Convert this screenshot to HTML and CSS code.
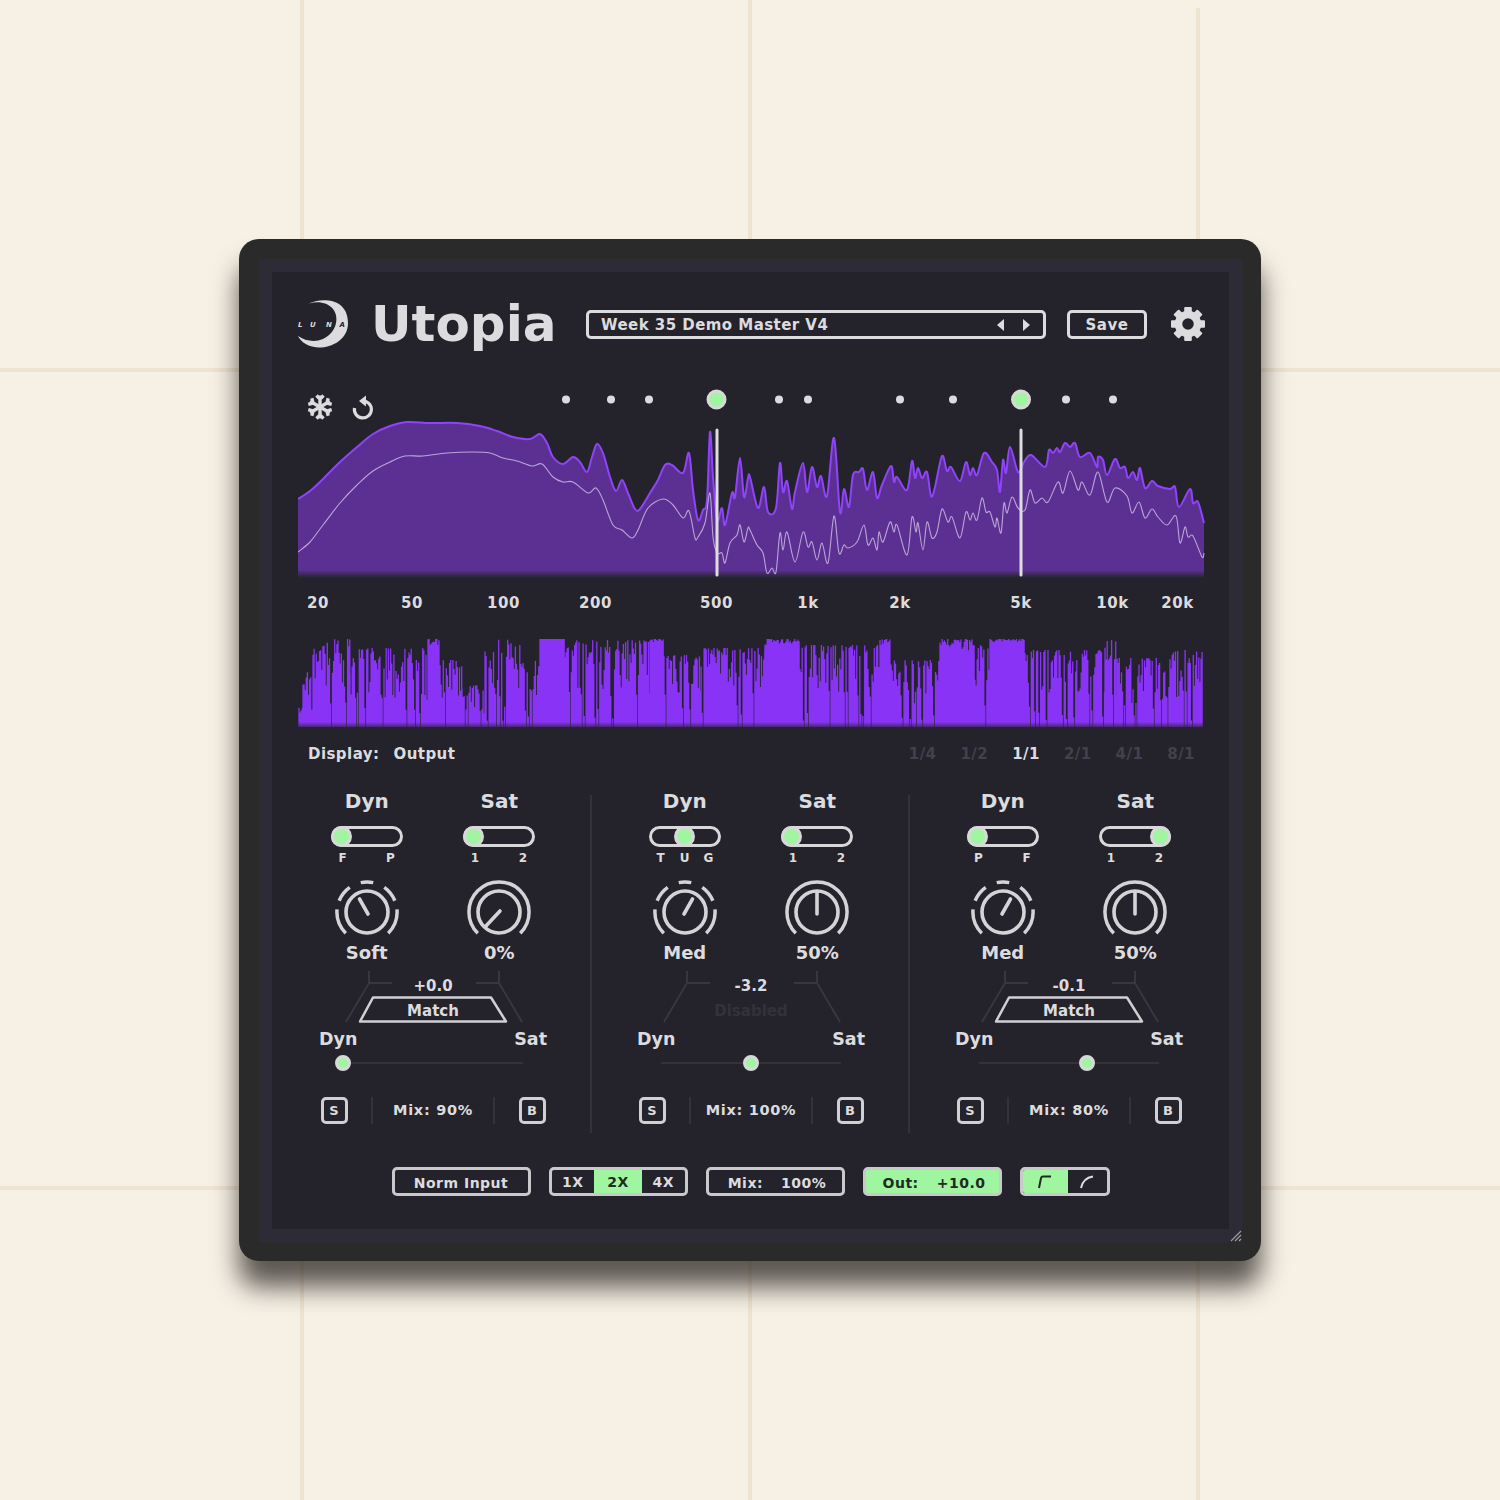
FILE: index.html
```html
<!DOCTYPE html>
<html lang="en">
<head>
  <meta charset="UTF-8">
  <title>Utopia</title>
  <link rel="stylesheet" href="styles.css">
</head>
<body>

<svg class="defs" width="0" height="0">
  <defs>
    <path id="ringSeg" d="M-6.45 -30.3A31 31 0 0 1 6.45 -30.3M17.8 -25.4A31 31 0 0 1 28.7 -11.6M30.9 -2.7A31 31 0 0 1 21.9 21.9M-28.7 -11.6A31 31 0 0 1 -17.8 -25.4M-21.9 21.9A31 31 0 0 1 -30.9 -2.7"/>
    <path id="ringFull" d="M-21.9 21.9A31 31 0 1 1 21.9 21.9"/>
    <linearGradient id="specGrad" gradientUnits="userSpaceOnUse" x1="0" y1="570" x2="0" y2="578">
      <stop offset="0" stop-color="#5c3093"/>
      <stop offset="1" stop-color="#5c3093" stop-opacity="0"/>
    </linearGradient>
    <linearGradient id="waveGrad" gradientUnits="userSpaceOnUse" x1="0" y1="722" x2="0" y2="728">
      <stop offset="0" stop-color="#8833f5"/>
      <stop offset="1" stop-color="#8833f5" stop-opacity="0.2"/>
    </linearGradient>
  </defs>
</svg>

<div class="window">
  <div class="frame">
    <div class="panel">

      <header class="top">
        <svg class="logo" viewBox="297 297 52 48">
          <path class="logo-moon" d="M309 300.500C320 295 348 294 348 320C348 337 331 345 318 344.500C308 344 301 339 298 333C305 338 315 339.500 323 336C336 330 340 315 333 306C327 299 318 298 309 300.500Z"/>
          <text class="logo-text" x="298" y="323.500">L</text>
          <text class="logo-text" x="310" y="323.500">U</text>
          <text class="logo-text" x="326" y="323.500">N</text>
          <text class="logo-text dark" x="339.500" y="323.500">A</text>
        </svg>
        <h1 class="title">Utopia</h1>
        <div class="preset">
          <span class="preset-name">Week 35 Demo Master V4</span>
          <svg class="arrows" viewBox="0 0 34 12">
            <polygon points="0,6 7,0 7,12"/>
            <polygon points="26,0 33,6 26,12"/>
          </svg>
        </div>
        <button class="btn save">Save</button>
        <svg class="gear" viewBox="-18 -18 36 36">
          <g>
            <rect x="-3.800" y="-17" width="7.600" height="8" rx="1"/>
            <rect x="-3.800" y="-17" width="7.600" height="8" rx="1" transform="rotate(45)"/>
            <rect x="-3.800" y="-17" width="7.600" height="8" rx="1" transform="rotate(90)"/>
            <rect x="-3.800" y="-17" width="7.600" height="8" rx="1" transform="rotate(135)"/>
            <rect x="-3.800" y="-17" width="7.600" height="8" rx="1" transform="rotate(180)"/>
            <rect x="-3.800" y="-17" width="7.600" height="8" rx="1" transform="rotate(225)"/>
            <rect x="-3.800" y="-17" width="7.600" height="8" rx="1" transform="rotate(270)"/>
            <rect x="-3.800" y="-17" width="7.600" height="8" rx="1" transform="rotate(315)"/>
          </g>
          <circle class="gear-body" r="9.500"/>
        </svg>
      </header>

      <svg class="analyzer" viewBox="298 385 907 230">
        <path id="specFill" fill="url(#specGrad)"/>
        <path id="specTop" class="spec-top"/>
        <path id="specLow" class="spec-low"/>

        <line class="cut" x1="717" y1="430" x2="717" y2="575"/>
        <line class="cut" x1="1021" y1="430" x2="1021" y2="575"/>

        <g class="dots">
          <circle cx="566" cy="399.500" r="4"/>
          <circle cx="611" cy="399.500" r="4"/>
          <circle cx="649" cy="399.500" r="4"/>
          <circle cx="779" cy="399.500" r="4"/>
          <circle cx="808" cy="399.500" r="4"/>
          <circle cx="900" cy="399.500" r="4"/>
          <circle cx="953" cy="399.500" r="4"/>
          <circle cx="1066" cy="399.500" r="4"/>
          <circle cx="1113" cy="399.500" r="4"/>
        </g>
        <circle class="handle" cx="716.500" cy="399.500" r="8.500"/>
        <circle class="handle" cx="1021" cy="399.500" r="8.500"/>

        <!-- freeze -->
        <g class="snow" transform="translate(320 407)">
          <path d="M0 0V-11.500M-3.500 -11.500L0 -8L3.500 -11.500"/>
          <path d="M0 0V-11.500M-3.500 -11.500L0 -8L3.500 -11.500" transform="rotate(60)"/>
          <path d="M0 0V-11.500M-3.500 -11.500L0 -8L3.500 -11.500" transform="rotate(120)"/>
          <path d="M0 0V-11.500M-3.500 -11.500L0 -8L3.500 -11.500" transform="rotate(180)"/>
          <path d="M0 0V-11.500M-3.500 -11.500L0 -8L3.500 -11.500" transform="rotate(240)"/>
          <path d="M0 0V-11.500M-3.500 -11.500L0 -8L3.500 -11.500" transform="rotate(300)"/>
        </g>
        <!-- reset -->
        <g transform="translate(363 409)">
          <path class="reset" d="M-1 -8A8.500 8.500 0 1 1 -8.500 -1"/>
          <polygon class="reset-head" points="-4,-8 3,-13.500 3,-2.500"/>
        </g>

        <g class="freqs">
          <text x="318" y="608">20</text>
          <text x="412" y="608">50</text>
          <text x="503.500" y="608">100</text>
          <text x="595.500" y="608">200</text>
          <text x="716.500" y="608">500</text>
          <text x="808" y="608">1k</text>
          <text x="900" y="608">2k</text>
          <text x="1021" y="608">5k</text>
          <text x="1112.500" y="608">10k</text>
          <text x="1177.500" y="608">20k</text>
        </g>
      </svg>

      <svg class="wave" viewBox="298 636 907 92">
        <path id="wave" class="wave-bars"/>
      </svg>

      <div class="display-row">
        <div class="display">
          <span>Display:</span>
          <span>Output</span>
        </div>
        <div class="rates">
          <span>1/4</span>
          <span>1/2</span>
          <span class="on">1/1</span>
          <span>2/1</span>
          <span>4/1</span>
          <span>8/1</span>
        </div>
      </div>

      <div class="bands">

        <section class="band">
          <div class="pair">
            <div class="unit">
              <div class="unit-title">Dyn</div>
              <div class="switch"><i class="knob"></i></div>
              <div class="ticks"><span>F</span><span>P</span></div>
              <svg class="dial" viewBox="-34 -32 68 64">
                <use class="ring" href="#ringSeg"/><circle r="21"/>
                <line x1="1" y1="2" x2="-7.500" y2="-13"/>
              </svg>
              <div class="dial-value">Soft</div>
            </div>
            <div class="unit">
              <div class="unit-title">Sat</div>
              <div class="switch"><i class="knob"></i></div>
              <div class="ticks"><span>1</span><span>2</span></div>
              <svg class="dial" viewBox="-34 -32 68 64">
                <use class="ring" href="#ringFull"/><circle r="21"/>
                <line x1="1" y1="-1" x2="-14" y2="15"/>
              </svg>
              <div class="dial-value">0%</div>
            </div>
          </div>
          <div class="link">
            <svg class="link-lines" viewBox="0 0 190 52">
              <path d="M31 0V12H54M31 12L8 51M161 0V12H138M161 12L184 51"/>
            </svg>
            <div class="link-value">+0.0</div>
            <svg class="match-shape" viewBox="0 0 150 27">
              <path d="M15 1.500H133L148 25.500H2Z"/>
            </svg>
            <div class="match">Match</div>
          </div>
          <div class="blend-labels"><span>Dyn</span><span>Sat</span></div>
          <div class="slider"><i class="knob" style="left: 0%"></i></div>
          <div class="foot">
            <div class="box">S</div>
            <div class="mix">Mix: 90%</div>
            <div class="box">B</div>
          </div>
        </section>

        <section class="band">
          <div class="pair">
            <div class="unit">
              <div class="unit-title">Dyn</div>
              <div class="switch mid"><i class="knob"></i></div>
              <div class="ticks"><span>T</span><span>U</span><span>G</span></div>
              <svg class="dial" viewBox="-34 -32 68 64">
                <use class="ring" href="#ringSeg"/><circle r="21"/>
                <line x1="-1" y1="2" x2="7.500" y2="-13"/>
              </svg>
              <div class="dial-value">Med</div>
            </div>
            <div class="unit">
              <div class="unit-title">Sat</div>
              <div class="switch"><i class="knob"></i></div>
              <div class="ticks"><span>1</span><span>2</span></div>
              <svg class="dial" viewBox="-34 -32 68 64">
                <use class="ring" href="#ringFull"/><circle r="21"/>
                <line x1="0" y1="2" x2="0" y2="-20"/>
              </svg>
              <div class="dial-value">50%</div>
            </div>
          </div>
          <div class="link">
            <svg class="link-lines" viewBox="0 0 190 52">
              <path d="M31 0V12H54M31 12L8 51M161 0V12H138M161 12L184 51"/>
            </svg>
            <div class="link-value">-3.2</div>
            <div class="match off">Disabled</div>
          </div>
          <div class="blend-labels"><span>Dyn</span><span>Sat</span></div>
          <div class="slider"><i class="knob" style="left: 50%"></i></div>
          <div class="foot">
            <div class="box">S</div>
            <div class="mix">Mix: 100%</div>
            <div class="box">B</div>
          </div>
        </section>

        <section class="band">
          <div class="pair">
            <div class="unit">
              <div class="unit-title">Dyn</div>
              <div class="switch"><i class="knob"></i></div>
              <div class="ticks"><span>P</span><span>F</span></div>
              <svg class="dial" viewBox="-34 -32 68 64">
                <use class="ring" href="#ringSeg"/><circle r="21"/>
                <line x1="-1" y1="2" x2="7.500" y2="-13"/>
              </svg>
              <div class="dial-value">Med</div>
            </div>
            <div class="unit">
              <div class="unit-title">Sat</div>
              <div class="switch end"><i class="knob"></i></div>
              <div class="ticks"><span>1</span><span>2</span></div>
              <svg class="dial" viewBox="-34 -32 68 64">
                <use class="ring" href="#ringFull"/><circle r="21"/>
                <line x1="0" y1="2" x2="0" y2="-20"/>
              </svg>
              <div class="dial-value">50%</div>
            </div>
          </div>
          <div class="link">
            <svg class="link-lines" viewBox="0 0 190 52">
              <path d="M31 0V12H54M31 12L8 51M161 0V12H138M161 12L184 51"/>
            </svg>
            <div class="link-value">-0.1</div>
            <svg class="match-shape" viewBox="0 0 150 27">
              <path d="M15 1.500H133L148 25.500H2Z"/>
            </svg>
            <div class="match">Match</div>
          </div>
          <div class="blend-labels"><span>Dyn</span><span>Sat</span></div>
          <div class="slider"><i class="knob" style="left: 60%"></i></div>
          <div class="foot">
            <div class="box">S</div>
            <div class="mix">Mix: 80%</div>
            <div class="box">B</div>
          </div>
        </section>

      </div>

      <footer class="bottom">
        <button class="btn wide">Norm Input</button>
        <div class="btn seg">
          <span>1X</span>
          <span class="on">2X</span>
          <span>4X</span>
        </div>
        <div class="btn wide spread">
          <span>Mix:</span>
          <span>100%</span>
        </div>
        <div class="btn wide spread lit">
          <span>Out:</span>
          <span>+10.0</span>
        </div>
        <div class="btn seg curves">
          <span class="on">
            <svg class="curve" viewBox="0 0 16 14"><path d="M2 13L4 3Q4.500 1.500 6 1.500H14"/></svg>
          </span>
          <span>
            <svg class="curve" viewBox="0 0 16 14"><path d="M2 13Q4 3 14 1.500"/></svg>
          </span>
        </div>
      </footer>

    </div>
  </div>
  <svg class="grip" viewBox="0 0 12 12">
    <path d="M1 11L11 1M5 11L11 5M9 11L11 9"/>
  </svg>
</div>

<script src="script.js"></script>
</body>
</html>
```

FILE: styles.css
```css
* {
  margin: 0;
  padding: 0;
  box-sizing: border-box;
}
body {
  width: 1500px;
  height: 1500px;
  display: flex;
  align-items: center;
  justify-content: center;
  overflow: hidden;
  font-family: 'DejaVu Sans', sans-serif;
  font-weight: 700;
  color: #dcdcdf;
  background-color: #f7f0e5;
  background-image:
    linear-gradient(#efe3d2, #efe3d2),
    linear-gradient(#efe3d2, #efe3d2),
    linear-gradient(#efe3d2, #efe3d2),
    linear-gradient(#efe3d2, #efe3d2),
    linear-gradient(#efe3d2, #efe3d2);
  background-repeat: no-repeat;
  background-size: 4px 100%, 4px 100%, 4px 100%, 100% 4px, 100% 4px;
  background-position: 300px 0, 748px 0, 1196px 8px, 0 368px, 0 1186px;
}
.defs {
  position: absolute;
}
.window {
  position: relative;
  width: 1022px;
  height: 1022px;
  padding: 20px 19px 19px 20px;
  background: #2a2a2b;
  border-radius: 20px;
  box-shadow: 0 26px 26px 0 rgba(40, 38, 32, 0.75);
}
.frame {
  height: 100%;
  padding: 13px;
  background: #2d2c36;
}
.panel {
  height: 100%;
  padding: 22px 25px 0 26px;
  background: #24232c;
}
.grip {
  position: absolute;
  right: 19px;
  bottom: 19px;
  width: 12px;
  height: 12px;
  fill: none;
  stroke: #9b9b9f;
  stroke-width: 1.200;
}

/* header */
.top {
  display: flex;
  align-items: center;
  height: 60px;
}
.top > * {
  flex: none;
}
.logo {
  width: 52px;
  height: 48px;
  margin-left: -1px;
}
.logo-moon {
  fill: #dcdcdf;
}
.logo-text {
  font-size: 7px;
  font-style: italic;
  fill: #dcdcdf;
}
.logo-text.dark {
  fill: #24232c;
}
.title {
  width: 184px;
  margin-left: 22px;
  font-size: 50px;
  line-height: 60px;
  font-weight: 700;
}
.preset {
  display: flex;
  align-items: center;
  justify-content: space-between;
  width: 460px;
  height: 29px;
  margin-left: 31px;
  padding: 2px 12px 0 12px;
  border: 3px solid #dcdcdf;
  border-radius: 5px;
  font-size: 15px;
  letter-spacing: 0.45px;
}
.arrows {
  width: 34px;
  height: 12px;
  fill: #dcdcdf;
}
.btn {
  display: flex;
  align-items: center;
  justify-content: center;
  height: 29px;
  padding-top: 2px;
  border: 3px solid #c9c9cc;
  border-radius: 5px;
  background: none;
  color: #dcdcdf;
  font-family: inherit;
  font-weight: 700;
  font-size: 14px;
  letter-spacing: 0.5px;
}
.save {
  width: 80px;
  margin-left: 21px;
  border-color: #dcdcdf;
  font-size: 15px;
}
.gear {
  width: 36px;
  height: 36px;
  margin-left: 23px;
  fill: #dcdcdf;
}
.gear-body {
  fill: #24232c;
  stroke: #dcdcdf;
  stroke-width: 7.500;
}

/* analyzer */
.analyzer {
  display: block;
  width: 907px;
  height: 230px;
  margin-top: 31px;
}
.spec-top {
  fill: none;
  stroke: #8f43fa;
  stroke-width: 2;
}
.spec-low {
  fill: none;
  stroke: #b9a6d6;
  stroke-width: 1.100;
}
.cut {
  stroke: #dddde0;
  stroke-width: 3;
  stroke-linecap: round;
}
.dots {
  fill: #dcdcdf;
}
.handle {
  fill: #a0f5a0;
  stroke: #d8d8da;
  stroke-width: 3;
}
.snow {
  fill: none;
  stroke: #dcdcdf;
  stroke-width: 3.400;
}
.reset {
  fill: none;
  stroke: #dcdcdf;
  stroke-width: 3.200;
}
.reset-head {
  fill: #dcdcdf;
}
.freqs {
  font-size: 15px;
  letter-spacing: 0.6px;
  text-anchor: middle;
  fill: #dcdcdf;
}

/* waveform */
.wave {
  display: block;
  width: 907px;
  height: 92px;
  margin-top: 21px;
}
.wave-bars {
  fill: none;
  stroke: url(#waveGrad);
  stroke-width: 1.300;
}
.display-row {
  display: flex;
  justify-content: space-between;
  align-items: center;
  height: 20px;
  margin-top: 16px;
  padding: 0 9px 0 10px;
  font-size: 15px;
  letter-spacing: 0.45px;
}
.display {
  display: flex;
  gap: 14px;
}
.rates {
  display: flex;
  gap: 24px;
  color: #42414b;
}
.rates .on {
  color: #dcdcdf;
}

/* bands */
.bands {
  display: grid;
  grid-template-columns: repeat(3, 318px);
  margin: 26px -25px 0 -24px;
}
.band {
  display: flex;
  flex-direction: column;
  align-items: center;
  padding-bottom: 9px;
  background: linear-gradient(#33323c, #33323c) right -1px top 5px / 3px 338px no-repeat;
}
.band:last-child {
  background: none;
}
.pair {
  display: grid;
  grid-template-columns: 132.500px 132.500px;
}
.unit {
  display: flex;
  flex-direction: column;
  align-items: center;
}
.unit-title {
  height: 22px;
  line-height: 22px;
  font-size: 20px;
}
.switch {
  display: flex;
  width: 72px;
  height: 21px;
  margin-top: 14px;
  border: 3px solid #d8d8da;
  border-radius: 11px;
}
.switch.mid {
  justify-content: center;
}
.switch.end {
  justify-content: flex-end;
}
.knob {
  display: block;
  flex: none;
  width: 21px;
  height: 21px;
  margin: -3px;
  border: 3px solid #d8d8da;
  border-radius: 50%;
  background: #a0f5a0;
}
.ticks {
  display: flex;
  justify-content: space-between;
  width: 60px;
  height: 12px;
  margin-top: 5px;
  line-height: 12px;
  font-size: 12px;
  letter-spacing: 0.5px;
  text-align: center;
}
.ticks span {
  width: 12px;
}
.dial {
  width: 68px;
  height: 64px;
  margin-top: 16px;
  fill: none;
  stroke: #d4d4d7;
  stroke-width: 3.600;
  stroke-linecap: round;
}
.ring {
  transform: scale(0.97);
  stroke-linecap: butt;
}
.dial-value {
  height: 20px;
  margin-top: -1px;
  line-height: 20px;
  font-size: 18px;
}
.link {
  position: relative;
  display: flex;
  flex-direction: column;
  align-items: center;
  width: 190px;
  height: 52px;
  margin-top: 9px;
  padding-top: 5px;
}
.link-lines {
  position: absolute;
  top: -1px;
  left: 0;
  width: 190px;
  height: 52px;
  fill: none;
  stroke: #383741;
  stroke-width: 2;
}
.link-value {
  position: relative;
  height: 18px;
  line-height: 18px;
  font-size: 15px;
}
.match-shape {
  position: absolute;
  top: 24px;
  left: 20px;
  width: 150px;
  height: 27px;
  fill: #24232c;
  stroke: #d0d0d3;
  stroke-width: 2.500;
  stroke-linejoin: round;
}
.match {
  position: relative;
  height: 20px;
  margin-top: 6px;
  line-height: 20px;
  font-size: 15px;
}
.match.off {
  color: #33323c;
}
.blend-labels {
  display: flex;
  justify-content: space-between;
  width: 228px;
  height: 20px;
  margin-top: 5px;
  line-height: 20px;
  font-size: 17.500px;
}
.slider {
  position: relative;
  width: 180px;
  height: 2px;
  margin: 13px 0 7px;
  background: #33323c;
}
.slider .knob {
  position: absolute;
  top: -7px;
  width: 16px;
  height: 16px;
  margin: 0 0 0 -8px;
}
.foot {
  display: flex;
  align-items: center;
  justify-content: space-between;
  width: 225px;
  height: 27px;
  margin-top: 26px;
}
.box {
  display: flex;
  align-items: center;
  justify-content: center;
  width: 27px;
  height: 27px;
  border: 3px solid #d0d0d3;
  border-radius: 5px;
  font-size: 13px;
}
.mix {
  width: 124px;
  height: 27px;
  line-height: 27px;
  text-align: center;
  font-size: 14.500px;
  letter-spacing: 0.7px;
  white-space: nowrap;
  border-left: 2px solid #33323c;
  border-right: 2px solid #33323c;
}

/* bottom row */
.bottom {
  display: flex;
  justify-content: center;
  gap: 18px;
  margin: 34px -25px 0 -26px;
}
.wide {
  width: 139px;
}
.spread {
  gap: 18px;
  padding-left: 4px;
}
.lit {
  background: #a0f5a0;
  color: #1f2a22;
}
.seg {
  flex: none;
  width: 139px;
  overflow: hidden;
  padding: 0;
}
.seg span {
  display: flex;
  align-items: center;
  justify-content: center;
  width: 42px;
  height: 100%;
  padding-top: 1px;
  flex: 1;
}
.seg .on {
  flex: none;
  width: 48px;
  background: #a0f5a0;
  color: #1f2a22;
}
.seg.curves {
  width: 90px;
}
.curves .on {
  width: 45px;
}
.curve {
  width: 16px;
  height: 14px;
  fill: none;
  stroke: #dcdcdf;
  stroke-width: 2;
}
.on .curve {
  stroke: #1f2a22;
}
```

FILE: script.js
```js
// traced spectrum outlines, x,y pairs in page pixels
const topLine = [
  298,499, 310,491, 323,479, 340,462, 357,447, 373,434, 390,426, 407,422, 430,423, 457,423, 480,426, 497,431,
  513,437, 530,439, 540,434, 547,443, 553,457, 563,464, 573,457, 580,462, 587,472, 592,457, 597,444, 603,453,
  610,477, 616,491, 622,480, 628,493, 635,509, 640,509, 650,493, 658,480, 665,465, 672,465, 683,473, 689,453,
  693,490, 698,520, 703,510, 707,500, 710,432, 713,477, 717,520, 722,508, 725,525, 732,493, 735,497, 740,458,
  744,497, 748,478, 750,477, 758,508, 764,487, 768,512, 776,508, 780,463, 783,492, 787,481, 792,509, 795,492,
  803,463, 807,492, 812,467, 817,487, 821,476, 827,496, 834,438, 840,512, 844,489, 849,507, 853,475, 859,472,
  863,469, 867,490, 873,472, 877,498, 882,485, 891,466, 894,482, 897,477, 907,490, 912,461, 915,478, 918,468,
  922,478, 927,472, 931,496, 935,487, 942,456, 947,471, 951,467, 960,481, 966,462, 970,475, 973,468, 977,475,
  984,453, 992,462, 997,470, 1000,492, 1003,460, 1006,473, 1010,447, 1018,472, 1024,462, 1031,455, 1045,467,
  1049,450, 1053,453, 1057,448, 1060,452, 1065,443, 1070,447, 1075,443, 1080,457, 1090,453, 1097,467, 1098,457,
  1103,460, 1107,475, 1115,459, 1120,468, 1125,467, 1128,478, 1133,472, 1137,480, 1140,468, 1145,488, 1152,481,
  1158,486, 1170,489, 1175,487, 1179,507, 1190,489, 1193,503, 1198,502, 1204,523
];
const lowLine = [
  298,552, 310,542, 323,525, 340,503, 357,485, 373,471, 390,462, 405,456, 423,456, 447,453, 473,452, 490,453,
  503,458, 517,461, 532,466, 542,464, 553,477, 563,482, 573,482, 588,493, 596,488, 603,500, 613,525, 622,530,
  632,538, 638,530, 648,508, 663,499, 673,505, 683,518, 689,511, 695,538, 698,537, 705,523, 710,493, 713,537,
  717,553, 722,553, 725,563, 730,543, 737,535, 740,525, 744,542, 748,528, 750,530, 757,545, 763,553, 767,573,
  772,568, 776,572, 780,533, 783,550, 787,532, 795,562, 803,532, 808,547, 812,542, 817,560, 822,543, 828,563,
  834,516, 839,553, 844,545, 848,548, 857,542, 864,525, 868,545, 873,538, 877,550, 879,532, 883,542, 890,522,
  894,532, 897,525, 907,555, 912,517, 916,532, 918,523, 923,550, 927,522, 932,538, 937,532, 942,509, 948,522,
  952,517, 960,538, 966,512, 970,520, 973,513, 977,520, 982,498, 986,512, 990,512, 995,527, 997,518, 1001,533,
  1004,503, 1007,513, 1012,497, 1018,508, 1025,510, 1030,490, 1035,503, 1042,498, 1048,502, 1058,482, 1063,493,
  1070,471, 1078,490, 1082,482, 1090,495, 1098,472, 1107,502, 1115,488, 1127,496, 1132,513, 1139,502, 1145,518,
  1152,509, 1158,517, 1167,525, 1176,516, 1180,543, 1185,527, 1188,537, 1193,536, 1202,557, 1204,553
];

// catmull-rom through the points
function smoothPath(p) {
  let d = `M${p[0]} ${p[1]}`;
  for (let i = 0; i < p.length - 2; i += 2) {
    const x0 = p[i - 2] ?? p[i], y0 = p[i - 1] ?? p[i + 1];
    const x1 = p[i], y1 = p[i + 1];
    const x2 = p[i + 2], y2 = p[i + 3];
    const x3 = p[i + 4] ?? x2, y3 = p[i + 5] ?? y2;
    const c1x = x1 + (x2 - x0) / 6, c1y = y1 + (y2 - y0) / 6;
    const c2x = x2 - (x3 - x1) / 6, c2y = y2 - (y3 - y1) / 6;
    d += `C${c1x.toFixed(1)} ${c1y.toFixed(1)} ${c2x.toFixed(1)} ${c2y.toFixed(1)} ${x2} ${y2}`;
  }
  return d;
}

const topPath = smoothPath(topLine);
document.getElementById('specTop').setAttribute('d', topPath);
document.getElementById('specLow').setAttribute('d', smoothPath(lowLine));
document.getElementById('specFill').setAttribute('d', topPath + 'V578H298Z');

// waveform: [from x, to x, top y, how far the bars may drop]
const waveEnv = [
  [299, 303, 708, 12], [303, 313, 672, 30], [313, 350, 639, 50], [350, 428, 648, 50], [428, 440, 639, 8],
  [440, 462, 660, 40], [462, 485, 685, 25], [485, 522, 639, 50], [522, 540, 660, 40], [540, 565, 639, 0],
  [565, 650, 640, 50], [650, 664, 639, 4], [664, 700, 655, 45], [700, 765, 648, 45], [765, 800, 639, 6],
  [800, 880, 645, 50], [880, 890, 639, 10], [890, 940, 660, 45], [940, 975, 639, 12], [975, 990, 645, 45],
  [990, 1025, 639, 3], [1025, 1105, 650, 45], [1105, 1116, 640, 20], [1116, 1170, 658, 45], [1170, 1203, 650, 50]
];

let seed = 35;
function rand() {
  seed = (seed * 16807) % 2147483647;
  return seed / 2147483647;
}

let waveD = '';
waveEnv.forEach(([from, to, top, drop]) => {
  for (let x = from; x < to; x += 1.1) {
    const r = rand();
    const y = top + r * r * drop;
    // thin dark gaps that reach down towards the baseline
    if (drop > 15 && rand() < 0.1) {
      waveD += `M${x.toFixed(1)} ${(690 + rand() * 32).toFixed(1)}V727`;
      x += 0.8;
      continue;
    }
    waveD += `M${x.toFixed(1)} ${y.toFixed(1)}V727`;
  }
});
document.getElementById('wave').setAttribute('d', waveD);
```
